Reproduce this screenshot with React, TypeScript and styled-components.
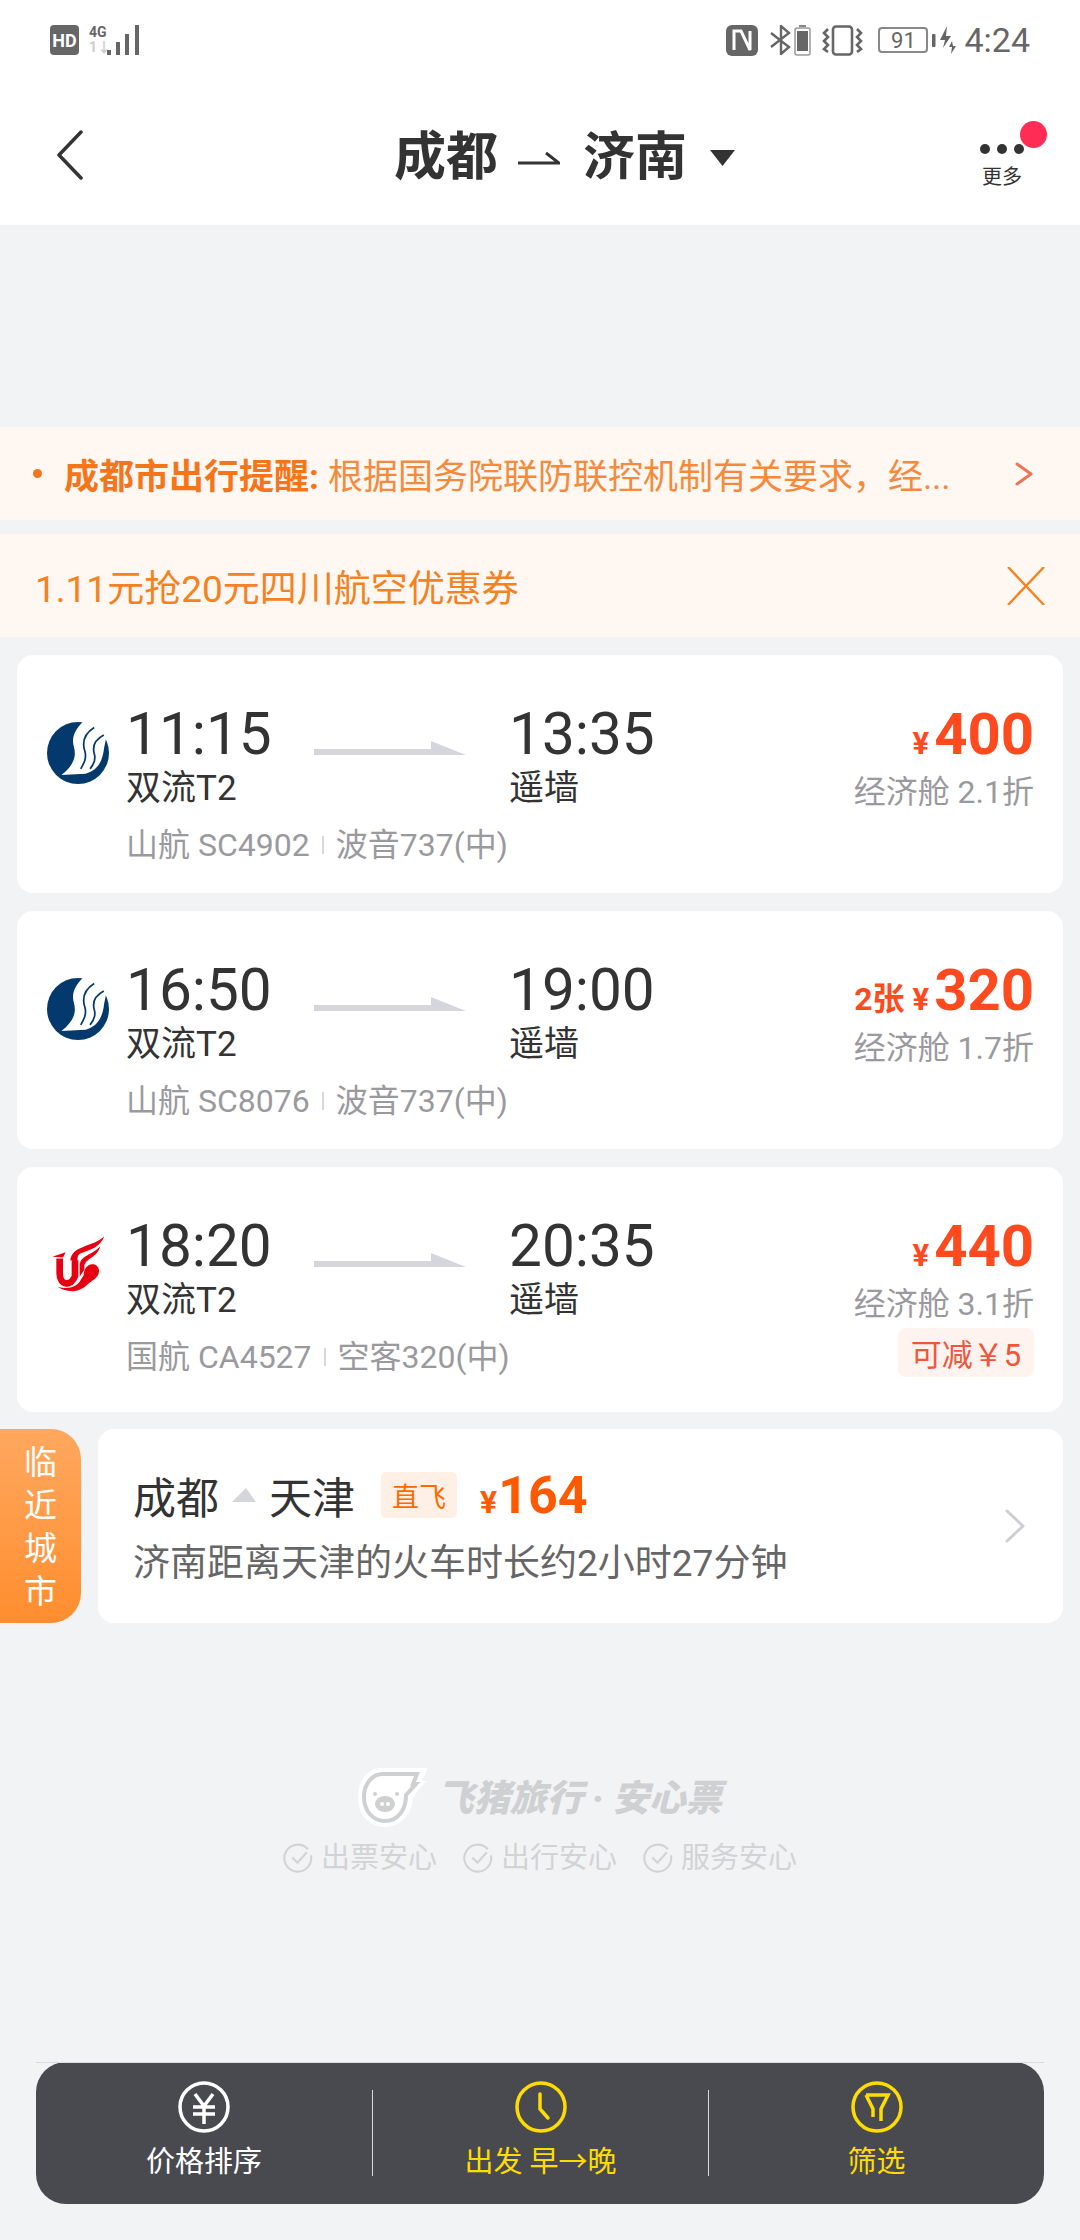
import React from 'react';
import styled, { createGlobalStyle } from 'styled-components';

const GlobalStyle = createGlobalStyle`
  html, body {
    margin: 0;
    padding: 0;
    background: #f2f3f5;
    font-family: Roboto, 'Noto Sans CJK SC', sans-serif;
  }
`;

const Page = styled.div`
  width: 1080px;
  min-height: 2240px;
  display: flex;
  flex-direction: column;
  background: #f2f3f5;
`;

const TopArea = styled.header`
  background: #fff;
`;

const StatusBar = styled.div`
  height: 70px;
  padding: 10px 50px 0;
  box-sizing: border-box;
  display: flex;
  align-items: center;
  justify-content: space-between;
  color: #666;
`;

const StatusGroup = styled.div`
  display: flex;
  align-items: center;
`;

const HdBadge = styled.span`
  width: 29px;
  height: 30px;
  border-radius: 4px;
  background: #666;
  color: #fff;
  font-size: 18px;
  font-weight: 700;
  display: flex;
  align-items: center;
  justify-content: center;
  margin-right: 10px;
`;

const NetStack = styled.span`
  display: flex;
  flex-direction: column;
  width: 18px;
  font-size: 14px;
  line-height: 15px;
  font-weight: 700;
  color: #666;
  white-space: nowrap;
`;

const NetDown = styled.span`
  color: #ccc;
`;

const BatteryBox = styled.span`
  width: 50px;
  height: 26px;
  box-sizing: border-box;
  border: 2px solid #888;
  border-radius: 4px;
  font-size: 22px;
  display: flex;
  align-items: center;
  justify-content: center;
  margin: 0 4px 0 15px;
`;

const Clock = styled.span`
  font-size: 34px;
  margin-left: 8px;
`;

const NavBar = styled.div`
  height: 155px;
  box-sizing: border-box;
  padding: 20px 0 0 56px;
  display: flex;
  align-items: center;
`;

const BackIcon = styled.svg`
  margin-top: -6px;
`;

const Title = styled.h1`
  margin: 0 0 0 311px;
  display: flex;
  align-items: center;
  font-size: 52px;
  font-weight: 700;
  color: #333;
  line-height: 60px;
`;

const TitleArrow = styled.svg`
  margin: 0 23px 0 20px;
`;

const TitleCaret = styled.svg`
  margin-left: 23px;
`;

const More = styled.div`
  position: relative;
  margin: 9px 0 0 245px;
  width: 44px;
  display: flex;
  flex-direction: column;
  align-items: center;
  padding-top: 10px;
`;

const Dots = styled.div`
  display: flex;
  gap: 7px;
`;

const Dot = styled.span`
  width: 10px;
  height: 10px;
  border-radius: 50%;
  background: #333;
`;

const RedDot = styled.span`
  position: absolute;
  top: -13px;
  right: -23px;
  width: 27px;
  height: 27px;
  border-radius: 50%;
  background: #ff2d55;
`;

const MoreLabel = styled.span`
  font-size: 20px;
  line-height: 28px;
  margin-top: 9px;
  color: #333;
`;

const Notice = styled.div`
  margin-top: 202px;
  height: 93px;
  background: #fff7f2;
  display: flex;
  align-items: center;
  padding: 0 47px 0 33px;
  font-size: 35px;
  color: #f58a3c;
`;

const Bullet = styled.span`
  width: 9px;
  height: 9px;
  border-radius: 50%;
  background: #f5761a;
  margin-right: 22px;
  flex: none;
`;

const NoticeStrong = styled.strong`
  color: #f5761a;
  font-weight: 700;
  margin-right: 9px;
`;

const NoticeText = styled.span`
  flex: 1;
  white-space: nowrap;
`;

const Coupon = styled.div`
  margin-top: 14px;
  height: 103px;
  background: #fff7f2;
  display: flex;
  align-items: center;
  justify-content: space-between;
  padding: 0 35px;
  font-size: 37px;
  color: #f5811f;
`;

const List = styled.main`
  margin-top: 18px;
  padding: 0 17px;
  display: flex;
  flex-direction: column;
  gap: 18px;
`;

const Card = styled.section`
  background: #fff;
  border-radius: 16px;
  padding: 47px 29px 27px 30px;
  display: flex;
  justify-content: space-between;
`;

const LogoCell = styled.div`
  width: 79px;
  flex: none;
  padding-top: 20px;
`;

const Body = styled.div`
  flex: 1;
`;

const TimeRow = styled.div`
  display: flex;
  align-items: flex-start;
`;

const Endpoint = styled.div`
  width: 188px;
`;

const Time = styled.div`
  font-size: 58.5px;
  line-height: 64px;
  color: #333;
`;

const Airport = styled.div`
  margin-top: 1px;
  font-size: 35px;
  line-height: 44px;
  color: #333;
`;

const FlightArrow = styled.svg`
  margin: 39px 43px 0 0;
  flex: none;
`;

const Info = styled.div`
  margin-top: 13px;
  display: flex;
  align-items: center;
  font-size: 32px;
  line-height: 42px;
  color: #9a9a9e;
`;

const InfoSep = styled.span`
  width: 2px;
  height: 18px;
  background: #d8d8d8;
  margin: 0 12px;
`;

const PriceCol = styled.div`
  display: flex;
  flex-direction: column;
  align-items: flex-end;
`;

const PriceRow = styled.div`
  display: flex;
  align-items: baseline;
  height: 64px;
  line-height: 64px;
  color: #ff4a1f;
  font-weight: 700;
`;

const Remain = styled.span`
  font-size: 32px;
  margin-right: 8px;
`;

const Yen = styled.span`
  font-size: 31px;
  margin-right: 5px;
`;

const Amount = styled.span`
  font-size: 58px;
`;

const Cabin = styled.div`
  margin-top: 4px;
  font-size: 32px;
  line-height: 44px;
  color: #9a9a9e;
`;

const Discount = styled.div`
  margin: 2px 0 8px;
  height: 49px;
  width: 136px;
  box-sizing: border-box;
  border-radius: 8px;
  background: #fff3f0;
  color: #f0563a;
  font-size: 31px;
  display: flex;
  align-items: center;
  justify-content: center;
  white-space: nowrap;
`;

const NearRow = styled.section`
  margin-top: 17px;
  display: flex;
  padding-right: 17px;
  gap: 17px;
`;

const NearTag = styled.div`
  width: 81px;
  flex: none;
  border-radius: 0 30px 30px 0;
  background: linear-gradient(180deg, #ffa85f 0%, #ff8d2e 100%);
  color: #fff;
  font-size: 33px;
  line-height: 43px;
  text-align: center;
  display: flex;
  align-items: center;
  justify-content: center;
  padding: 1px 18px 0;
  box-sizing: border-box;
`;

const NearCard = styled.div`
  flex: 1;
  height: 194px;
  box-sizing: border-box;
  border-radius: 16px;
  background: #fff;
  padding: 0 38px 0 35px;
  display: flex;
  align-items: center;
  justify-content: space-between;
`;

const NearBody = styled.div`
  display: flex;
  flex-direction: column;
  align-self: flex-start;
  padding-top: 38px;
`;

const NearRoute = styled.div`
  display: flex;
  align-items: center;
  height: 56px;
  font-size: 43px;
  color: #333;
`;

const SmallArrow = styled.svg`
  margin: 0 13px;
`;

const DirectBadge = styled.span`
  margin: 0 23px 0 26px;
  width: 76px;
  height: 46px;
  border-radius: 5px;
  background: #fff0e6;
  color: #ff6a00;
  font-size: 27px;
  display: flex;
  align-items: center;
  justify-content: center;
`;

const NearPrice = styled.span`
  display: flex;
  align-items: baseline;
  color: #ff5a00;
  font-weight: 700;
  font-size: 52px;
`;

const NearYen = styled.span`
  font-size: 32px;
  margin-right: 1px;
`;

const NearDesc = styled.div`
  margin-top: 17px;
  font-size: 37px;
  line-height: 48px;
  color: #666;
  white-space: nowrap;
`;

const Brand = styled.footer`
  margin-top: 144px;
  display: flex;
  flex-direction: column;
  align-items: center;
`;

const BrandLine = styled.div`
  display: flex;
  align-items: center;
  height: 59px;
`;

const BrandName = styled.span`
  margin: -3px 0 0 9px;
  font-size: 36.5px;
  font-weight: 900;
  font-style: italic;
  color: #cfd0d2;
  white-space: nowrap;
`;

const Promises = styled.div`
  margin-top: 14px;
  display: flex;
  gap: 26px;
`;

const Promise = styled.span`
  display: flex;
  align-items: center;
  gap: 8px;
  font-size: 29px;
  line-height: 36px;
  color: #d2d3d5;
`;

const BottomBar = styled.nav`
  position: relative;
  margin: auto 36px 36px;
  height: 142px;
  border-radius: 30px;
  background: #494a4f;
  display: grid;
  grid-template-columns: repeat(3, 1fr);
  align-items: center;

  &::before {
    content: '';
    position: absolute;
    top: 0;
    left: 0;
    right: 0;
    height: 1px;
    background: #dcdde0;
  }
`;

const BarItem = styled.div<{ $active?: boolean; $divider?: boolean }>`
  height: 86px;
  display: flex;
  flex-direction: column;
  align-items: center;
  color: ${({ $active }) => ($active ? '#ffdc00' : '#fff')};
  border-left: ${({ $divider }) => ($divider ? '1px solid #d8d8d8' : 'none')};
`;

const BarIcon = styled.svg`
  flex: none;
  margin-top: -9px;
`;

const BarLabel = styled.span`
  flex: none;
  font-size: 29px;
  line-height: 40px;
  margin-top: 9px;
  white-space: nowrap;
`;

const AirChinaMark = styled.svg`
  margin: 2px 0 0 4px;
`;

const Chevron = ({ color, w, h, sw }: { color: string; w: number; h: number; sw: number }) => (
  <svg width={w} height={h} viewBox={`0 0 ${w} ${h}`} fill="none">
    <path d={`M2 2 L${w - 2} ${h / 2} L2 ${h - 2}`} stroke={color} strokeWidth={sw} strokeLinecap="round" strokeLinejoin="round" />
  </svg>
);

const SichuanLogo = () => (
  <svg width="62" height="62" viewBox="0 0 180 180">
    <circle cx="90" cy="90" r="90" fill="#03396c" />
    <path d="M106 -2 C82 20 70 45 78 72 C86 100 78 125 42 154 L112 150 C150 140 162 110 166 74 L182 -2 Z" fill="#fff" />
    <path d="M137 16 C112 32 100 55 110 85 C116 105 106 122 98 136" fill="none" stroke="#03396c" strokeWidth="5" />
    <path d="M165 38 C142 50 130 70 138 95 C142 112 134 125 125 136" fill="none" stroke="#03396c" strokeWidth="5" />
  </svg>
);

const AirChinaLogo = () => (
  <AirChinaMark width="54" height="59" viewBox="92 78 162 176">
    <path d="M96 140 L136 126 L128 142 Z" fill="#e60012" />
    <path d="M118 145 V190 C118 226 152 230 164 198 V150" fill="none" stroke="#e60012" strokeWidth="20" />
    <path d="M150 150 C155 105 215 112 252 78 C240 112 205 120 180 130 C170 135 172 145 172 155 Z" fill="#e60012" />
    <path d="M178 200 V165 C180 135 215 135 240 108 C230 142 200 142 192 165 V178 Z" fill="#e60012" />
    <path d="M190 195 C190 158 232 152 236 180 C238 202 214 212 202 222 C182 244 145 252 112 230 C145 240 172 228 182 208 Z" fill="#e60012" />
  </AirChinaMark>
);

const PigLogo = () => (
  <svg width="70" height="60" viewBox="0 0 70 60">
    <path d="M24 1 H70 L64 14 L68 14 L55 30 C54 48 42 60 27 60 C11 60 0 47 0 30 C0 13 10 1 24 1 Z" fill="#fff" />
    <path d="M25 7 H59 L55 17 L58 17 L48 28 C48 44 39 54 27 54 C15 54 6 44 6 30 C6 17 14 7 25 7 Z" fill="none" stroke="#cfd0d2" strokeWidth="4" />
    <ellipse cx="27" cy="37" rx="10" ry="8" fill="#cfd0d2" />
    <circle cx="24" cy="37" r="2" fill="#fff" />
    <circle cx="30" cy="37" r="2" fill="#fff" />
    <circle cx="17" cy="27" r="2" fill="#cfd0d2" />
    <circle cx="39" cy="27" r="2" fill="#cfd0d2" />
  </svg>
);

const CheckCircle = () => (
  <svg width="30" height="30" viewBox="0 0 29 29" fill="none" stroke="#d2d3d5" strokeWidth="2">
    <path d="M24 6 A13 13 0 1 0 27 12" />
    <path d="M9 14 L14 19 L23 9" />
  </svg>
);

type Flight = {
  logo: React.ReactNode;
  dep: string;
  arr: string;
  flightNo: string;
  plane: string;
  remain?: string;
  price: number;
  cabin: string;
  discount?: string;
};

const flights: Flight[] = [
  { logo: <SichuanLogo />, dep: '11:15', arr: '13:35', flightNo: '山航 SC4902', plane: '波音737(中)', price: 400, cabin: '经济舱 2.1折' },
  { logo: <SichuanLogo />, dep: '16:50', arr: '19:00', flightNo: '山航 SC8076', plane: '波音737(中)', remain: '2张', price: 320, cabin: '经济舱 1.7折' },
  { logo: <AirChinaLogo />, dep: '18:20', arr: '20:35', flightNo: '国航 CA4527', plane: '空客320(中)', price: 440, cabin: '经济舱 3.1折', discount: '可减￥5' },
];

const FlightCard = ({ flight }: { flight: Flight }) => (
  <Card>
    <LogoCell>{flight.logo}</LogoCell>
    <Body>
      <TimeRow>
        <Endpoint>
          <Time>{flight.dep}</Time>
          <Airport>双流T2</Airport>
        </Endpoint>
        <FlightArrow width="152" height="14" viewBox="0 0 152 14">
          <path d="M0 8 H117 V0 L152 14 H0 Z" fill="#d5d6dc" />
        </FlightArrow>
        <Endpoint>
          <Time>{flight.arr}</Time>
          <Airport>遥墙</Airport>
        </Endpoint>
      </TimeRow>
      <Info>
        {flight.flightNo}
        <InfoSep />
        {flight.plane}
      </Info>
    </Body>
    <PriceCol>
      <PriceRow>
        {flight.remain && <Remain>{flight.remain}</Remain>}
        <Yen>¥</Yen>
        <Amount>{flight.price}</Amount>
      </PriceRow>
      <Cabin>{flight.cabin}</Cabin>
      {flight.discount && <Discount>{flight.discount}</Discount>}
    </PriceCol>
  </Card>
);

export default function App() {
  return (
    <Page>
      <GlobalStyle />
      <TopArea>
        <StatusBar>
          <StatusGroup>
            <HdBadge>HD</HdBadge>
            <NetStack>
              <span>4G</span>
              <NetDown>1↓</NetDown>
            </NetStack>
            <svg width="33" height="30" viewBox="0 0 33 30" fill="#666">
              <rect x="0" y="25" width="4" height="5" />
              <rect x="9" y="17" width="4" height="13" />
              <rect x="18" y="9" width="4" height="21" />
              <rect x="28" y="0" width="4" height="30" />
            </svg>
          </StatusGroup>
          <StatusGroup>
            <svg width="32" height="31" viewBox="0 0 32 31">
              <rect width="32" height="31" rx="6" fill="#666" />
              <path d="M8 25 V6 L15 6 L24 25 V6" fill="none" stroke="#fff" strokeWidth="3" />
            </svg>
            <svg width="24" height="30" viewBox="0 0 24 30" fill="none" stroke="#666" strokeWidth="2.4" style={{ marginLeft: 11 }}>
              <path d="M2 8 L20 22 L12 29 V1 L20 8 L2 22" />
            </svg>
            <svg width="17" height="31" viewBox="0 0 17 31" style={{ marginLeft: 1 }}>
              <rect x="5" y="0" width="7" height="2" fill="#888" />
              <rect x="1" y="3" width="15" height="27" rx="2" fill="#fff" stroke="#999" strokeWidth="1.5" />
              <rect x="3" y="6" width="11" height="20" fill="#666" />
            </svg>
            <svg width="41" height="31" viewBox="0 0 41 31" fill="none" stroke="#666" strokeWidth="2.6" style={{ marginLeft: 11 }}>
              <rect x="11" y="1.5" width="19" height="28" rx="3" />
              <path d="M6 4 L2 8 L6 12 L2 16 L6 20 L2 24 L6 27" />
              <path d="M35 4 L39 8 L35 12 L39 16 L35 20 L39 24 L35 27" />
            </svg>
            <BatteryBox>91</BatteryBox>
            <svg width="24" height="28" viewBox="0 0 24 28" fill="#666">
              <rect x="0" y="8" width="3.5" height="13" rx="1" />
              <path d="M15 0 L8 14 H13 L11 22 L19 10 H14 Z" />
              <path d="M20 15 L17 21 H20 L19 28 L24 20 H21 Z" />
            </svg>
            <Clock>4:24</Clock>
          </StatusGroup>
        </StatusBar>
        <NavBar>
          <BackIcon width="27" height="50" viewBox="0 0 27 50" fill="none">
            <path d="M25 2 L3 25 L25 48" stroke="#333" strokeWidth="3.5" strokeLinecap="round" strokeLinejoin="round" />
          </BackIcon>
          <Title>
            成都
            <TitleArrow width="42" height="14" viewBox="0 0 42 14" fill="none">
              <path d="M0 12 H41 L28 2" stroke="#333" strokeWidth="3" />
            </TitleArrow>
            济南
            <TitleCaret width="25" height="16" viewBox="0 0 25 16">
              <path d="M0 0 H25 L12.5 16 Z" fill="#333" />
            </TitleCaret>
          </Title>
          <More>
            <Dots>
              <Dot />
              <Dot />
              <Dot />
            </Dots>
            <RedDot />
            <MoreLabel>更多</MoreLabel>
          </More>
        </NavBar>
      </TopArea>

      <Notice>
        <Bullet />
        <NoticeText>
          <NoticeStrong>成都市出行提醒:</NoticeStrong>
          根据国务院联防联控机制有关要求，经...
        </NoticeText>
        <Chevron color="#ee7458" w={18} h={24} sw={3} />
      </Notice>

      <Coupon>
        1.11元抢20元四川航空优惠券
        <svg width="38" height="38" viewBox="0 0 38 38" fill="none" stroke="#f5811f" strokeWidth="2.4">
          <path d="M1 0 L37 38 M37 0 L1 38" />
        </svg>
      </Coupon>

      <List>
        {flights.map(f => (
          <FlightCard key={f.flightNo} flight={f} />
        ))}
      </List>

      <NearRow>
        <NearTag>临近城市</NearTag>
        <NearCard>
          <NearBody>
            <NearRoute>
              成都
              <SmallArrow width="24" height="14" viewBox="0 0 24 14">
                <path d="M0 14 L14 0 L24 14 Z" fill="#d5d6dc" />
              </SmallArrow>
              天津
              <DirectBadge>直飞</DirectBadge>
              <NearPrice>
                <NearYen>¥</NearYen>164
              </NearPrice>
            </NearRoute>
            <NearDesc>济南距离天津的火车时长约2小时27分钟</NearDesc>
          </NearBody>
          <Chevron color="#ccced3" w={20} h={34} sw={3} />
        </NearCard>
      </NearRow>

      <Brand>
        <BrandLine>
          <PigLogo />
          <BrandName>飞猪旅行 · 安心票</BrandName>
        </BrandLine>
        <Promises>
          <Promise><CheckCircle />出票安心</Promise>
          <Promise><CheckCircle />出行安心</Promise>
          <Promise><CheckCircle />服务安心</Promise>
        </Promises>
      </Brand>

      <BottomBar>
        <BarItem>
          <BarIcon width="52" height="52" viewBox="0 0 52 52" fill="none" stroke="currentColor" strokeWidth="3.5">
            <circle cx="26" cy="26" r="24" />
            <path d="M17 13 L26 25 L35 13 M15 26 H37 M15 33 H37 M26 25 V43" />
          </BarIcon>
          <BarLabel>价格排序</BarLabel>
        </BarItem>
        <BarItem $active $divider>
          <BarIcon width="52" height="52" viewBox="0 0 52 52" fill="none" stroke="currentColor" strokeWidth="3.5" strokeLinecap="round">
            <circle cx="26" cy="26" r="24" />
            <path d="M25 13 V28 L33 37" />
          </BarIcon>
          <BarLabel>出发 早→晚</BarLabel>
        </BarItem>
        <BarItem $active $divider>
          <BarIcon width="52" height="52" viewBox="0 0 52 52" fill="none" stroke="currentColor" strokeWidth="3.5">
            <circle cx="26" cy="26" r="24" />
            <path d="M15 14 H37 L30 28 V40 M15 14 L22 28 V36" />
          </BarIcon>
          <BarLabel>筛选</BarLabel>
        </BarItem>
      </BottomBar>
    </Page>
  );
}
